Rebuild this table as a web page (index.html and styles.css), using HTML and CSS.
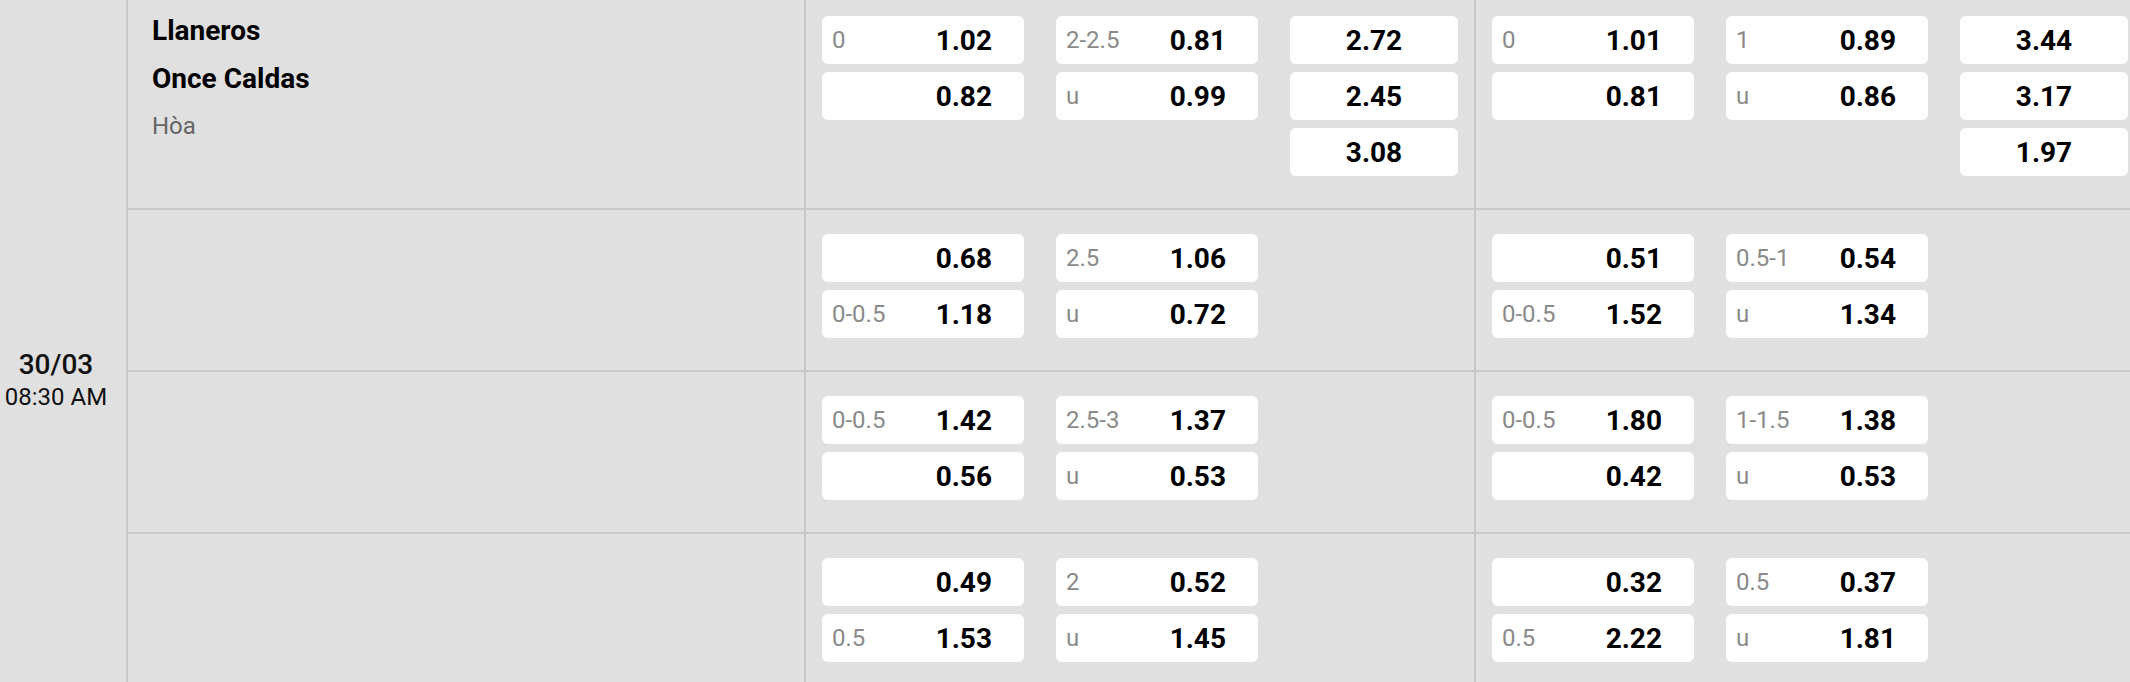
FILE: index.html
```html
<!DOCTYPE html>
<html lang="vi">
<head>
<meta charset="utf-8">
<title>Llaneros - Once Caldas</title>
<link rel="stylesheet" href="styles.css">
</head>
<body>
<div class="board">
  <div class="date-cell">
    <div class="date">30/03</div>
    <div class="time">08:30 AM</div>
  </div>
  <div class="rows">
    <div class="row row-main">
      <div class="teams">
        <div class="team">Llaneros</div>
        <div class="team">Once Caldas</div>
        <div class="draw">Hòa</div>
      </div>
      <div class="market">
        <div class="col">
          <div class="odd"><span class="lbl">0</span><span class="val">1.02</span></div>
          <div class="odd"><span class="lbl"></span><span class="val">0.82</span></div>
        </div>
        <div class="col">
          <div class="odd"><span class="lbl">2-2.5</span><span class="val">0.81</span></div>
          <div class="odd"><span class="lbl">u</span><span class="val">0.99</span></div>
        </div>
        <div class="col col-x">
          <div class="odd odd-x"><span class="val">2.72</span></div>
          <div class="odd odd-x"><span class="val">2.45</span></div>
          <div class="odd odd-x"><span class="val">3.08</span></div>
        </div>
      </div>
      <div class="market">
        <div class="col">
          <div class="odd"><span class="lbl">0</span><span class="val">1.01</span></div>
          <div class="odd"><span class="lbl"></span><span class="val">0.81</span></div>
        </div>
        <div class="col">
          <div class="odd"><span class="lbl">1</span><span class="val">0.89</span></div>
          <div class="odd"><span class="lbl">u</span><span class="val">0.86</span></div>
        </div>
        <div class="col col-x">
          <div class="odd odd-x"><span class="val">3.44</span></div>
          <div class="odd odd-x"><span class="val">3.17</span></div>
          <div class="odd odd-x"><span class="val">1.97</span></div>
        </div>
      </div>
    </div>

    <div class="row">
      <div class="teams"></div>
      <div class="market">
        <div class="col">
          <div class="odd"><span class="lbl"></span><span class="val">0.68</span></div>
          <div class="odd"><span class="lbl">0-0.5</span><span class="val">1.18</span></div>
        </div>
        <div class="col">
          <div class="odd"><span class="lbl">2.5</span><span class="val">1.06</span></div>
          <div class="odd"><span class="lbl">u</span><span class="val">0.72</span></div>
        </div>
        <div class="col col-x"></div>
      </div>
      <div class="market">
        <div class="col">
          <div class="odd"><span class="lbl"></span><span class="val">0.51</span></div>
          <div class="odd"><span class="lbl">0-0.5</span><span class="val">1.52</span></div>
        </div>
        <div class="col">
          <div class="odd"><span class="lbl">0.5-1</span><span class="val">0.54</span></div>
          <div class="odd"><span class="lbl">u</span><span class="val">1.34</span></div>
        </div>
        <div class="col col-x"></div>
      </div>
    </div>

    <div class="row">
      <div class="teams"></div>
      <div class="market">
        <div class="col">
          <div class="odd"><span class="lbl">0-0.5</span><span class="val">1.42</span></div>
          <div class="odd"><span class="lbl"></span><span class="val">0.56</span></div>
        </div>
        <div class="col">
          <div class="odd"><span class="lbl">2.5-3</span><span class="val">1.37</span></div>
          <div class="odd"><span class="lbl">u</span><span class="val">0.53</span></div>
        </div>
        <div class="col col-x"></div>
      </div>
      <div class="market">
        <div class="col">
          <div class="odd"><span class="lbl">0-0.5</span><span class="val">1.80</span></div>
          <div class="odd"><span class="lbl"></span><span class="val">0.42</span></div>
        </div>
        <div class="col">
          <div class="odd"><span class="lbl">1-1.5</span><span class="val">1.38</span></div>
          <div class="odd"><span class="lbl">u</span><span class="val">0.53</span></div>
        </div>
        <div class="col col-x"></div>
      </div>
    </div>

    <div class="row">
      <div class="teams"></div>
      <div class="market">
        <div class="col">
          <div class="odd"><span class="lbl"></span><span class="val">0.49</span></div>
          <div class="odd"><span class="lbl">0.5</span><span class="val">1.53</span></div>
        </div>
        <div class="col">
          <div class="odd"><span class="lbl">2</span><span class="val">0.52</span></div>
          <div class="odd"><span class="lbl">u</span><span class="val">1.45</span></div>
        </div>
        <div class="col col-x"></div>
      </div>
      <div class="market">
        <div class="col">
          <div class="odd"><span class="lbl"></span><span class="val">0.32</span></div>
          <div class="odd"><span class="lbl">0.5</span><span class="val">2.22</span></div>
        </div>
        <div class="col">
          <div class="odd"><span class="lbl">0.5</span><span class="val">0.37</span></div>
          <div class="odd"><span class="lbl">u</span><span class="val">1.81</span></div>
        </div>
        <div class="col col-x"></div>
      </div>
    </div>
  </div>
</div>
</body>
</html>
```

FILE: styles.css
```css
* {
  box-sizing: border-box;
}

html, body {
  margin: 0;
  padding: 0;
  background: #e0e0e0;
  overflow: hidden;
}

body {
  font-family: Roboto, "Liberation Sans", Arial, sans-serif;
  color: #000;
}

.board {
  display: flex;
  margin: -8px 0 0 -14px;
  width: max-content;
}

.date-cell {
  flex: 0 0 142px;
  width: 142px;
  border-right: 2px solid #c8c8c8;
  padding-top: 356px;
  text-align: center;
}

.date {
  font-size: 28px;
  font-weight: 500;
  line-height: 33px;
  color: #111;
}

.time {
  font-size: 24px;
  line-height: 33px;
  color: #111;
}

.rows {
  display: flex;
  flex-direction: column;
}

.row {
  display: flex;
  border-bottom: 2px solid #c8c8c8;
}

.teams {
  flex: 0 0 678px;
  width: 678px;
  border-right: 2px solid #c8c8c8;
  padding: 24px 24px 0;
  display: flex;
  flex-direction: column;
  gap: 19px;
}

.team {
  font-size: 28px;
  font-weight: 700;
  line-height: 29px;
  color: #000;
}

.draw {
  font-size: 24px;
  line-height: 28px;
  color: #666;
}

.market {
  flex: 0 0 670px;
  width: 670px;
  border-right: 2px solid #c8c8c8;
  padding: 24px 16px 32px;
  display: flex;
  gap: 32px;
}

.col {
  flex: 0 0 202px;
  display: flex;
  flex-direction: column;
  gap: 8px;
}

.col-x {
  flex: 0 0 168px;
}

.odd {
  height: 48px;
  background: #fff;
  border-radius: 6px;
  display: flex;
  align-items: center;
  justify-content: space-between;
  padding: 0 32px 0 10px;
}

.odd-x {
  justify-content: center;
  padding: 0;
}

.lbl {
  font-size: 24px;
  color: #8a8a8a;
}

.val {
  font-size: 28px;
  font-weight: 700;
  color: #000;
}
```
